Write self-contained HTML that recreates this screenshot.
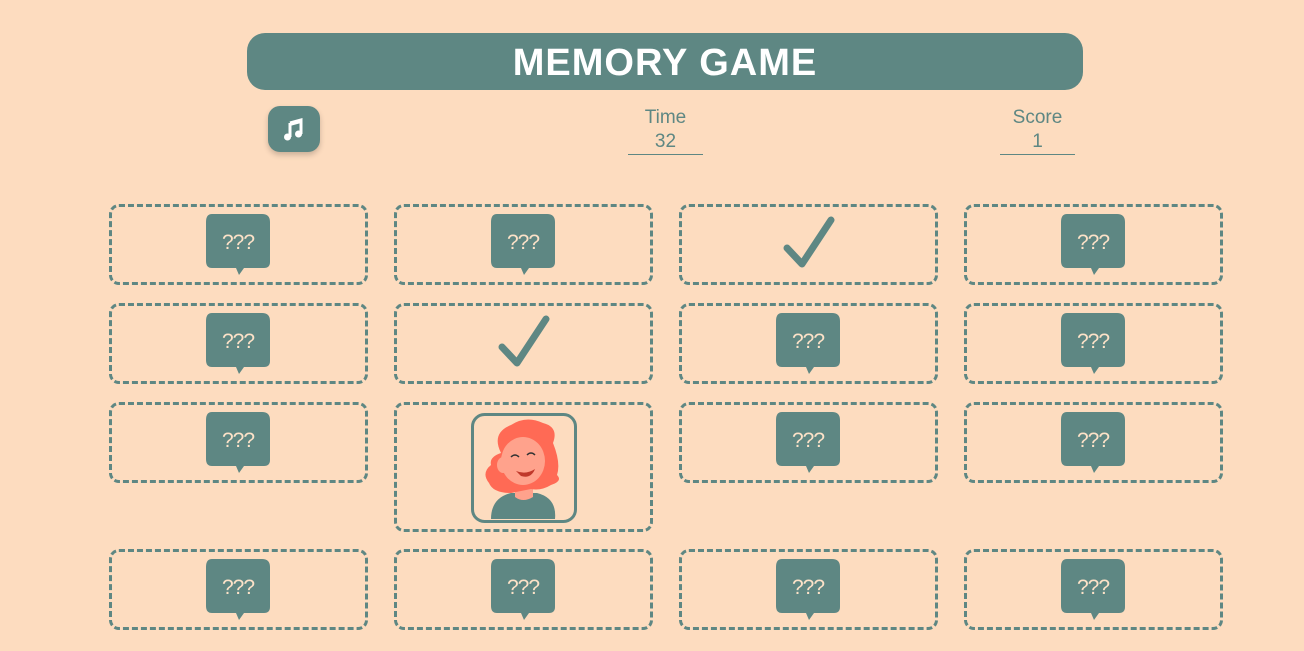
<!DOCTYPE html>
<html><head><style>
body{margin:0;width:1304px;height:651px;background:#fddcbf;font-family:"Comic Sans MS","Liberation Sans",sans-serif;position:relative;overflow:hidden}
.hdr{position:absolute;left:247px;top:33px;width:836px;height:57px;background:#5e8783;border-radius:18px;color:#fff;font-weight:bold;font-size:38px;text-align:center;line-height:60px;letter-spacing:1px}
.mus{position:absolute;left:268px;top:106px;width:52px;height:46px;background:#5e8783;border-radius:12px;box-shadow:0 3px 6px rgba(0,0,0,.2)}
.st{position:absolute;width:75px;text-align:center;color:#5e8783;font-size:19px;line-height:24px;top:106px;border-bottom:1px solid #5e8783;padding-bottom:0}
.c{position:absolute;width:253px;height:75px;border:3px dashed #5e8783;border-radius:10px;box-sizing:content-box}
.q{position:absolute;left:94px;top:7px}
.k{position:absolute;left:101px;top:7px}
</style></head><body>
<div class="hdr">MEMORY GAME</div>
<div class="mus"><svg width="52" height="46" viewBox="0 0 52 46"><path d="M22 17 L33 14 V28" stroke="#fff" stroke-width="3" fill="none"/><path d="M22 17 V31" stroke="#fff" stroke-width="3"/><path d="M22 16 L33 13 V17 L22 20Z" fill="#fff"/><circle cx="19.5" cy="31" r="3.5" fill="#fff"/><circle cx="30.5" cy="28" r="3.5" fill="#fff"/></svg></div>
<div class="st" style="left:628px">Time<br>32</div>
<div class="st" style="left:1000px">Score<br>1</div>
<svg width="0" height="0" style="position:absolute"><defs>
<g id="qb"><path d="M6 0 H56 Q64 0 64 8 V48 Q64 54 58 54 H38 L33 61 L30 54 H6 Q0 54 0 47 V8 Q0 0 6 0Z" fill="#5e8783"/><text x="32" y="35" text-anchor="middle" fill="#fde2c8" font-size="21" font-family="Liberation Sans,sans-serif" letter-spacing="-1">???</text></g>
<g id="ck"><path d="M4 34 L19 50 L48 6" stroke="#5e8783" stroke-width="7" fill="none" stroke-linecap="round" stroke-linejoin="round"/></g>
</defs></svg>
<div class="c" style="left:109px;top:204px"><svg class="q" width="64" height="62"><use href="#qb"/></svg></div>
<div class="c" style="left:394px;top:204px"><svg class="q" width="64" height="62"><use href="#qb"/></svg></div>
<div class="c" style="left:679px;top:204px"><svg class="k" width="52" height="60"><use href="#ck"/></svg></div>
<div class="c" style="left:964px;top:204px"><svg class="q" width="64" height="62"><use href="#qb"/></svg></div>
<div class="c" style="left:109px;top:303px"><svg class="q" width="64" height="62"><use href="#qb"/></svg></div>
<div class="c" style="left:394px;top:303px"><svg class="k" width="52" height="60"><use href="#ck"/></svg></div>
<div class="c" style="left:679px;top:303px"><svg class="q" width="64" height="62"><use href="#qb"/></svg></div>
<div class="c" style="left:964px;top:303px"><svg class="q" width="64" height="62"><use href="#qb"/></svg></div>
<div class="c" style="left:109px;top:402px"><svg class="q" width="64" height="62"><use href="#qb"/></svg></div>
<div class="c" style="left:394px;top:402px;height:124px">
<svg style="position:absolute;left:74px;top:8px" width="106" height="110" viewBox="0 0 106 110">
<rect x="1.5" y="1.5" width="103" height="107" rx="12" fill="none" stroke="#5e8783" stroke-width="3"/>
<path d="M20 106 Q20 85 40 80 H66 Q86 85 84 106Z" fill="#5e8783"/>
<path d="M44 70 L44 84 Q52 90 62 84 L62 70Z" fill="#ffa28c"/>
<path d="M30 40 Q20 20 40 12 Q55 2 72 10 Q88 14 82 30 Q90 50 86 62 Q92 68 80 72 Q70 78 60 76 L40 80 Q22 80 18 70 Q10 60 20 52 Q18 44 30 40Z" fill="#ff6a55"/>
<ellipse cx="52" cy="48" rx="22" ry="24" fill="#ffa28c"/>
<path d="M30 28 Q50 18 74 30 Q66 20 52 18 Q36 20 30 28Z" fill="#ff6a55"/>
<ellipse cx="32" cy="52" rx="6" ry="8" fill="#ffa28c"/>
<path d="M40 44 Q44 40 48 44 M56 42 Q60 38 64 42" stroke="#333" stroke-width="1.5" fill="none"/>
<path d="M45 58 Q55 62 64 56 Q60 66 50 63Z" fill="#c0392b"/>
</svg></div>
<div class="c" style="left:679px;top:402px"><svg class="q" width="64" height="62"><use href="#qb"/></svg></div>
<div class="c" style="left:964px;top:402px"><svg class="q" width="64" height="62"><use href="#qb"/></svg></div>
<div class="c" style="left:109px;top:549px"><svg class="q" width="64" height="62"><use href="#qb"/></svg></div>
<div class="c" style="left:394px;top:549px"><svg class="q" width="64" height="62"><use href="#qb"/></svg></div>
<div class="c" style="left:679px;top:549px"><svg class="q" width="64" height="62"><use href="#qb"/></svg></div>
<div class="c" style="left:964px;top:549px"><svg class="q" width="64" height="62"><use href="#qb"/></svg></div>
</body></html>
